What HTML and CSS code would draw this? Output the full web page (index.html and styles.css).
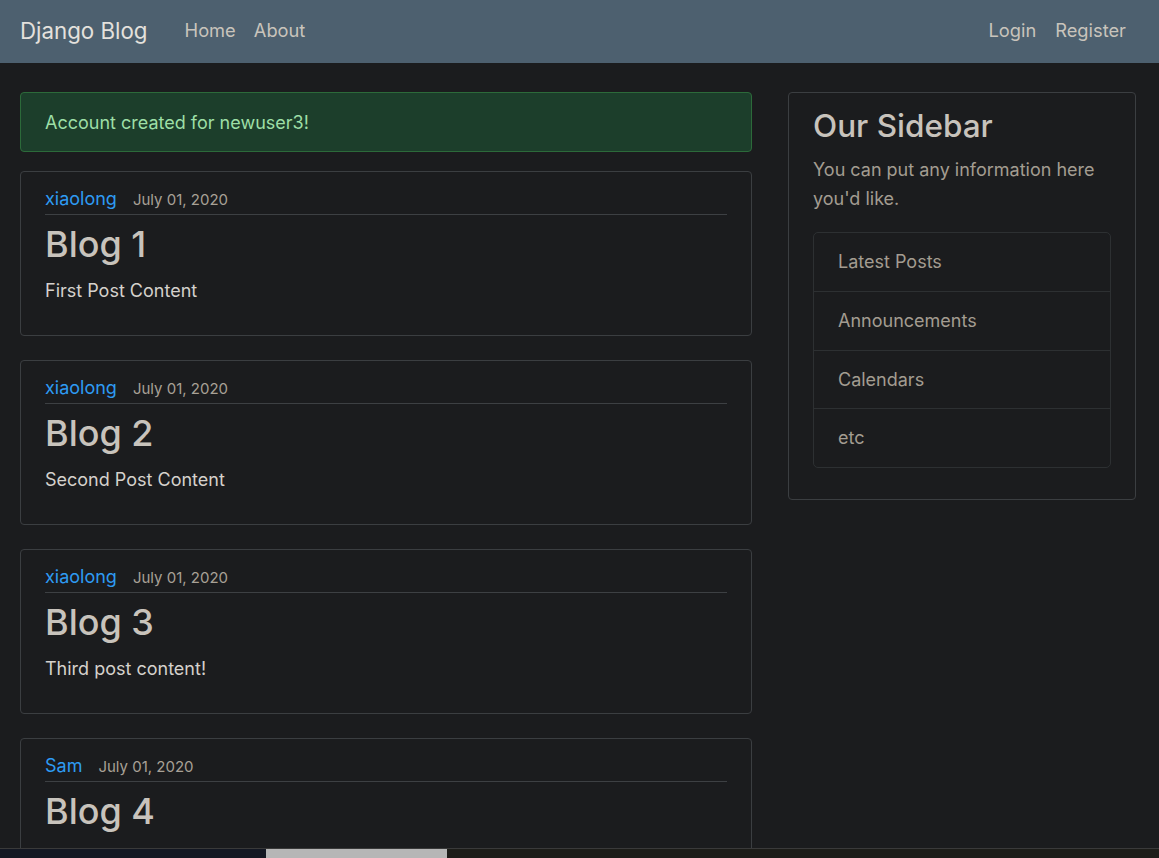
FILE: index.html
```html
<!DOCTYPE html>
<html lang="en">
<head>
<meta charset="utf-8">
<title>Django Blog</title>
<link rel="stylesheet" href="styles.css">
</head>
<body>
<header class="site-header">
  <nav class="navbar">
    <div class="nav-left">
      <a class="brand" href="#">Django Blog</a>
      <a class="nav-link" href="#">Home</a>
      <a class="nav-link" href="#">About</a>
    </div>
    <div class="nav-right">
      <a class="nav-link" href="#">Login</a>
      <a class="nav-link" href="#">Register</a>
    </div>
  </nav>
</header>
<main class="container">
  <div class="main-col">
    <div class="alert">Account created for newuser3!</div>
    <article class="content-section">
      <div class="article-metadata"><a class="author" href="#">xiaolong</a><small class="date">July 01, 2020</small></div>
      <h2 class="article-title">Blog 1</h2>
      <p class="article-content">First Post Content</p>
    </article>
    <article class="content-section">
      <div class="article-metadata"><a class="author" href="#">xiaolong</a><small class="date">July 01, 2020</small></div>
      <h2 class="article-title">Blog 2</h2>
      <p class="article-content">Second Post Content</p>
    </article>
    <article class="content-section">
      <div class="article-metadata"><a class="author" href="#">xiaolong</a><small class="date">July 01, 2020</small></div>
      <h2 class="article-title">Blog 3</h2>
      <p class="article-content">Third post content!</p>
    </article>
    <article class="content-section">
      <div class="article-metadata"><a class="author" href="#">Sam</a><small class="date">July 01, 2020</small></div>
      <h2 class="article-title">Blog 4</h2>
    </article>
  </div>
  <aside class="side-col">
    <div class="sidebar">
      <h3 class="sidebar-title">Our Sidebar</h3>
      <p class="sidebar-text">You can put any information here you'd like.</p>
      <ul class="list-group">
        <li class="list-item">Latest Posts</li>
        <li class="list-item">Announcements</li>
        <li class="list-item">Calendars</li>
        <li class="list-item">etc</li>
      </ul>
    </div>
  </aside>
</main>
<div class="bottom-strip">
  <div class="strip-a"></div>
  <div class="strip-b"></div>
  <div class="strip-c"></div>
</div>
</body>
</html>
```
FILE: styles.css
```css
* { box-sizing: border-box; }
html, body { height: 100%; }
body {
  margin: 0;
  background: #1b1c1e;
  color: #d5d1cc;
  font-family: Inter, "Noto Sans", "Liberation Sans", sans-serif;
  font-size: 18px;
  line-height: 27px;
  overflow: hidden;
}
a { text-decoration: none; }

.navbar {
  height: 63px;
  background: #4d606f;
  display: flex;
  align-items: center;
  justify-content: space-between;
  padding: 0 23px 0 20px;
}
.nav-left, .nav-right { display: flex; align-items: center; }
.brand {
  font-size: 22.3px;
  color: #e4e1dd;
  margin-right: 28px;
  line-height: 30px;
  margin-top: -2px;
}
.nav-link {
  color: #c9c4bc;
  font-size: 18.3px;
  padding: 0 10px;
  line-height: 27px;
  margin-top: -2px;
}
.nav-left .nav-link { padding: 0 9px; }
.nav-right .nav-link:first-child { padding-right: 9px; }

.container {
  display: grid;
  grid-template-columns: 732px 348px;
  column-gap: 36px;
  padding: 29px 23px 0 20px;
  align-items: start;
}

.alert {
  height: 60px;
  background: #1c3e2b;
  border: 1px solid #2c6a3a;
  border-radius: 4px;
  color: #9ddfa6;
  padding: 16px 24px 0 24px;
  line-height: 28px;
  margin-bottom: 19px;
}

.content-section {
  border: 1px solid #3b3e41;
  border-radius: 4px;
  padding: 11px 24px 0 24px;
  height: 165px;
  margin-bottom: 24px;
}
.article-metadata {
  display: flex;
  align-items: baseline;
  border-bottom: 1px solid #3d4043;
  height: 32px;
  padding-top: 2px;
  margin-bottom: 8px;
}
.author {
  color: #2e9bf3;
  font-size: 18px;
  margin-right: 16px;
}
.date {
  color: #a8a196;
  font-size: 15px;
}
.article-title {
  margin: 0 0 11px 0;
  font-size: 36px;
  line-height: 43px;
  font-weight: 500;
  color: #c8c3bc;
}
.article-content {
  margin: 0;
  color: #d5d1cc;
}

.sidebar {
  border: 1px solid #3b3e41;
  border-radius: 4px;
  padding: 14px 24px 31px 24px;
}
.sidebar-title {
  margin: 0 0 10px 0;
  font-size: 31.5px;
  line-height: 38px;
  font-weight: 500;
  color: #c8c3bc;
}
.sidebar-text {
  margin: 0 0 19px 0;
  color: #a39c91;
  line-height: 29px;
}
.list-group {
  list-style: none;
  margin: 0;
  padding: 0;
  border: 1px solid #2d3032;
  border-radius: 5px;
}
.list-item {
  height: 58.5px;
  padding: 15px 24px;
  color: #a39c91;
  line-height: 27px;
  border-top: 1px solid #2d3032;
}
.list-item:first-child { border-top: none; height: 58px; }

.bottom-strip {
  position: fixed;
  left: 0;
  right: 0;
  bottom: 0;
  height: 10px;
  display: flex;
  border-top: 1px solid #3a3a3a;
}
.strip-a { width: 266px; background: #141823; }
.strip-b { width: 181px; background: #b6b6b6; }
.strip-c { flex: 1; background: #1d1d19; }
```
